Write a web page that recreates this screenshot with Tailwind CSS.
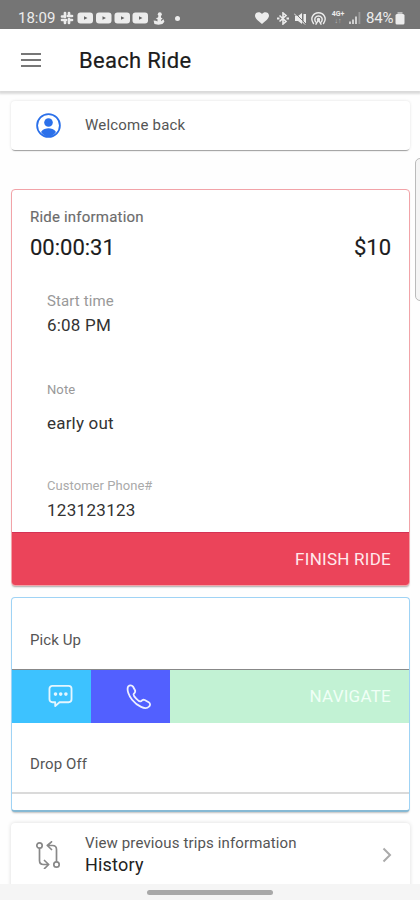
<!DOCTYPE html>
<html lang="en">
<head>
<meta charset="utf-8">
<meta name="viewport" content="width=device-width, initial-scale=1">
<title>Beach Ride</title>
<script src="https://cdn.jsdelivr.net/npm/@tailwindcss/browser@4"></script>
</head>
<body class="bg-white">
<div class="relative flex h-[900px] w-[420px] flex-col overflow-hidden bg-[#fefefe] font-[Roboto,sans-serif] whitespace-nowrap text-[#222]">
  <!-- Status bar -->
  <div class="flex h-[29px] shrink-0 items-center bg-[#757575] pt-[7px] pl-[18px] text-[#ececec]">
    <span class="w-[42px] text-[15px] leading-[22px]">18:09</span>
    <svg class="h-[14px] w-[14px] shrink-0" viewBox="0 0 14 14" fill="none" stroke="currentColor" stroke-width="2.700" stroke-linecap="round"><path d="M5 2v4M9 8v4M2 9h4M8 5h4M5 9v3M9 2v3M2 5.500h3M9 9h3"/></svg>
    <svg class="ml-[3px] h-[12px] w-[72px] shrink-0" viewBox="0 0 72 12"><g fill="currentColor"><rect x="0.5" y="0.5" width="15.5" height="11" rx="3"/><rect x="19" y="0.5" width="15.5" height="11" rx="3"/><rect x="37.5" y="0.5" width="15.5" height="11" rx="3"/><rect x="55.500" y="0.5" width="15.5" height="11" rx="3"/></g><path d="M7 4.300l3.500 1.700L7 7.700zM25.500 4.300L29 6l-3.500 1.700zM44 4.300L47.500 6 44 7.700zM62 4.300L65.500 6 62 7.700z" fill="#666"/></svg>
    <svg class="ml-[4px] h-[13px] w-[12px] shrink-0" viewBox="0 0 12 13" fill="currentColor"><circle cx="6.800" cy="2.200" r="2"/><path d="M5.500 3.500h2.300l.3 2.200 1.500.6-1.500 1.400v1.500l2.400-2 .9 2.500-2 2.300-4 .7-4-.7L.6 8.500l2.200.3 1.700.7V7.200L2.700 6.300l2.300-.8z"/></svg>
    <span class="ml-[10px] h-[5px] w-[5px] rounded-full bg-[#ececec]"></span>
    <span class="grow"></span>
    <svg class="ml-px h-[12px] w-[14px] shrink-0" viewBox="0 0 14 12" fill="currentColor"><path d="M7 12C2 8 0 6 0 3.500 0 0 5-1 7 2c2-3 7-2 7 1.500C14 6 12 8 7 12z"/></svg>
    <svg class="ml-[8px] h-[13px] w-[12px] shrink-0" viewBox="0 0 12 13" fill="none" stroke="currentColor" stroke-width="1.600"><path d="M2.500 3.500l6.500 6-3 2.500V1l3 2.500-6.500 6"/><path d="M0 6.500h2.500M9.500 6.500H12" stroke-width="2"/></svg>
    <svg class="ml-[5px] h-[13px] w-[13px] shrink-0" viewBox="0 0 13 13" fill="currentColor"><path d="M1 4h3l4-3v11L4 9H1zM9.500 2H12v9H9.500z"/><path d="M1 1l11 11" stroke="#757575"/><path d="M0 1.500l11 11" stroke="currentColor"/></svg>
    <svg class="ml-[4px] h-[13px] w-[15px] shrink-0" viewBox="0 0 15 13" fill="none" stroke="currentColor" stroke-width="1.400" stroke-linecap="round"><path d="M2.500 11.500C-1.500 6 2.500.8 7.500.8s9 5.200 5 10.700M4.700 10C2.500 6.500 5 4 7.500 4s5 2.500 2.800 6M5 12.200L7.500 8l2.500 4.200"/><circle cx="7.500" cy="7.500" r="1" fill="currentColor"/></svg>
    <span class="ml-[5px] flex h-[14px] w-[14px] flex-col text-center text-[7px] leading-[7px] font-bold"><span>4G+</span><span class="text-[7px] leading-[6px] font-normal text-[#bbb]">↓↑</span></span>
    <svg class="ml-[4px] h-[12px] w-[12px] shrink-0" viewBox="0 0 12 12" fill="#d0d0d0"><path d="M0 9.500h2V12H0zM3 7.500h2V12H3zM6 4.500h2V12H6z"/><path d="M9.500 0h1.800v12H9.500z" fill="#9a9a9a"/></svg>
    <span class="ml-[5px] w-[28px] text-[15px] leading-[22px] tracking-[-0.2px]">84%</span>
    <svg class="mr-[15px] ml-[1px] h-[13px] w-[10px] shrink-0" viewBox="0 0 10 13" fill="currentColor"><rect x="2.500" y="0" width="5" height="3" fill="#bbb"/><rect x="0.500" y="2" width="9" height="10.500" rx="1.500"/></svg>
  </div>

  <!-- App bar -->
  <header class="flex h-[62px] shrink-0 items-center bg-white pl-[21px] shadow-[0_2px_2px_1px_rgba(0,0,0,0.14)]">
    <svg class="h-[16px] w-[20px]" viewBox="0 0 20 16" stroke="#777" stroke-width="2"><path d="M0 2h20M0 8h20M0 14h20"/></svg>
    <h1 class="mt-px ml-[38px] text-[22px] leading-[28px] font-normal tracking-[0.3px] text-[#1c1c1c] [-webkit-text-stroke:0.2px_#1c1c1c]">Beach Ride</h1>
  </header>

  <main class="flex grow flex-col pr-[10px] pl-[11px]">
    <section class="mt-[10px] flex h-[49px] shrink-0 items-center rounded-[4px] bg-white pl-[25px] shadow-[0_2px_1px_-1px_rgba(0,0,0,0.35),0_0_3px_rgba(0,0,0,0.12)]">
      <svg class="h-[25px] w-[25px]" viewBox="0 0 25 25"><circle cx="12.500" cy="12.500" r="11.400" fill="none" stroke="#2b70ea" stroke-width="1.800"/><circle cx="12.500" cy="9.500" r="4.300" fill="#2b70ea"/><path d="M5 19c2-3 5-3.700 7.500-3.700S18 16 20 19c-4 6-11 6-15 0z" fill="#2b70ea"/></svg>
      <span class="-mt-px ml-[24px] text-[15px] leading-[20px] tracking-[0.2px] text-[#555]">Welcome back</span>
    </section>

    <section class="mt-[39px] flex h-[397px] shrink-0 flex-col overflow-hidden rounded-[4px] border border-[#f2a3a8] bg-white shadow-[0_2px_2px_-1px_rgba(0,0,0,0.35)]">
      <div class="flex grow flex-col pt-[17px] pr-[18px] pl-[18px]">
        <div class="text-[15px] leading-[20px] tracking-[0.2px] text-[#6c6c6c] [-webkit-text-stroke:0.15px_#6c6c6c]">Ride information</div>
        <div class="mt-[7px] flex justify-between text-[22px] leading-[28px] text-[#1c1c1c] [-webkit-text-stroke:0.15px_#1c1c1c]"><span>00:00:31</span><span>$10</span></div>
        <div class="flex flex-col pl-[17px]">
          <span class="mt-[29px] text-[15px] leading-[20px] tracking-[0.1px] text-[#999]">Start time</span>
          <span class="mt-[2px] text-[17px] leading-[24px] tracking-[0.2px] text-[#333]">6:08 PM</span>
          <span class="mt-[44px] text-[13px] leading-[18px] tracking-[0.1px] text-[#999]">Note</span>
          <span class="mt-[12px] text-[17px] leading-[24px] tracking-[0.2px] text-[#333]">early out</span>
          <span class="mt-[42px] text-[13px] leading-[18px] tracking-[0.05px] text-[#aaa]">Customer Phone#</span>
          <span class="mt-[3px] text-[17px] leading-[24px] tracking-[0.3px] text-[#333]">123123123</span>
        </div>
      </div>
      <button class="flex h-[53px] shrink-0 items-center justify-end border-t border-[#d43255] bg-[#eb445a] pr-[18px] text-[17px] leading-[24px] tracking-[0.25px] text-[#ffe9ec]">FINISH RIDE</button>
    </section>

    <section class="mt-[11px] flex h-[215px] shrink-0 flex-col overflow-hidden rounded-[4px] border border-b-2 border-[#9fd3f5] border-b-[#86b9d4] bg-white shadow-[0_2px_2px_-1px_rgba(0,0,0,0.25)]">
      <div class="flex h-[71px] items-center pt-[13px] pl-[18px] text-[15px] leading-[20px] tracking-[0.1px] text-[#555]">Pick Up</div>
      <div class="flex h-[54px] border-t border-[#888]">
        <button class="flex w-[79px] items-center bg-[#3dc2ff] pl-[36px]">
          <svg class="-mt-px h-[24px] w-[25px]" viewBox="0 0 26 25" fill="none" stroke="#e4f6ff" stroke-width="1.900" stroke-linejoin="round"><path d="M4.500 2h17a3 3 0 0 1 3 3v11a3 3 0 0 1-3 3H12l-4.500 4v-4h-3a3 3 0 0 1-3-3V5a3 3 0 0 1 3-3z"/><g fill="#e4f6ff" stroke="none"><circle cx="7.800" cy="10.500" r="1.900"/><circle cx="13.200" cy="10.500" r="1.900"/><circle cx="18.600" cy="10.500" r="1.900"/></g></svg>
        </button>
        <button class="flex w-[79px] items-center bg-[#5260ff] pl-[35px]">
          <svg class="-mt-px h-[25px] w-[26px]" viewBox="0 0 26 25" fill="none" stroke="#eef0ff" stroke-width="1.800" stroke-linejoin="round"><path d="M2.300 2.300C3.500 1 5.800.8 7 2.500l2 3.700c.7 1.600 0 2.500-1.300 3.700-.7 1 .5 2.600 2.500 4.700s3.800 3.200 4.800 2.700c1.200-1.300 2.200-2 3.700-1.300l4 2.200c1.700 1 1.800 3 .4 4.300-2.200 2.300-4.700 2-8 .4-3.600-1.700-6.200-3.700-9-7.200C3.200 12 .2 5.800 2.300 2.300z"/></svg>
        </button>
        <button class="flex grow items-center justify-end bg-[#c2f2d4] pr-[18px] pb-[2px] text-[17px] leading-[24px] tracking-[0.25px] text-[#f0fff6]">NAVIGATE</button>
      </div>
      <div class="flex h-[69px] items-center pt-[13px] pl-[18px] text-[15px] leading-[20px] tracking-[0.1px] text-[#555]">Drop Off</div>
      <div class="h-[2px] bg-[#dadada]"></div>
    </section>

    <section class="mt-[11px] flex h-[76px] shrink-0 items-center rounded-[4px] bg-white pr-[18px] pl-[24px] shadow-[0_0_4px_rgba(0,0,0,0.14)]">
      <svg class="mt-[-12px] h-[28px] w-[27px]" viewBox="0 0 27 28" fill="none" stroke="#888" stroke-width="1.700" stroke-linecap="round" stroke-linejoin="round"><circle cx="4.500" cy="4.500" r="2.700"/><circle cx="21.500" cy="23.500" r="2.700"/><path d="M4.500 7.500v12q0 4 4 4h5M9.500 19.500l4.200 4-4.200 4M21.500 20.500v-12q0-4-4-4h-5M16.500.8l-4.200 3.700 4.200 4"/></svg>
      <div class="mt-[-12px] ml-[23px] flex grow flex-col">
        <span class="text-[15px] leading-[20px] tracking-[0.13px] text-[#555]">View previous trips information</span>
        <span class="text-[18px] leading-[24px] tracking-[0.2px] text-[#222]">History</span>
      </div>
      <svg class="mt-[-13px] h-[16px] w-[10px]" viewBox="0 0 10 16" fill="none" stroke="#aaa" stroke-width="2"><path d="M1.500 1.500L8 8l-6.500 6.500"/></svg>
    </section>
  </main>

  <!-- Edge panel handle over the content -->
  <div class="absolute top-[158px] left-[415px] h-[143px] w-[12px] rounded-[5px] border border-[#bbb] bg-[#f5f5f5]"></div>
  <!-- Gesture bar -->
  <div class="absolute inset-x-0 bottom-0 flex h-[16px] justify-center bg-[#f5f5f5] pt-[6px]"><span class="h-[5px] w-[126px] rounded-full bg-[#a8a8a8]"></span></div>
</div>
</body>
</html>
